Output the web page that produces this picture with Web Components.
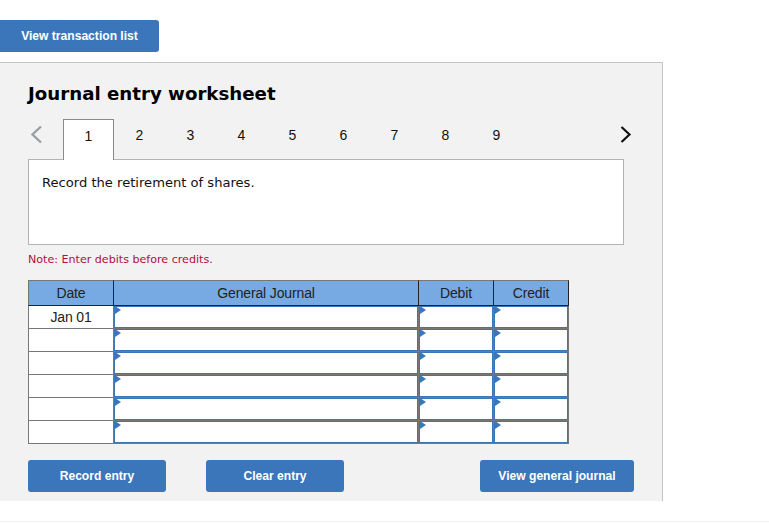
<!DOCTYPE html>
<html>
<head>
<meta charset="utf-8">
<style>
  html, body { margin: 0; padding: 0; background: #fff; }
  body { height: 523px; overflow: hidden; font-family: "Liberation Sans", Arial, sans-serif; }
</style>
</head>
<body>
<journal-page></journal-page>

<script>
class blueButton extends HTMLElement {
    constructor() {
        super();
        this.attachShadow({mode: 'open'});
        this.shadowRoot.innerHTML = `
        <style>
            :host{
                display: flex;
                align-items: center;
                justify-content: center;
                box-sizing: border-box;
                height: 32px;
                background: #3b76bb;
                border-radius: 3px;
                color: #fff;
                font: bold 12.1px "Liberation Sans", Arial, sans-serif;
                cursor: pointer;
            }
        </style>
        <slot></slot>`;
    }
}

class stepTabs extends HTMLElement {
    constructor() {
        super();
        this.attachShadow({mode: 'open'});
        let tabs = '';
        for (let i = 1; i <= 9; i++) {
            tabs += `<div class="tab ${i == 1 ? 'active' : ''}">${i}</div>`;
        }
        this.shadowRoot.innerHTML = `
        <style>
            :host{
                display: flex;
                height: 41px;
                position: relative;
                z-index: 1;
            }
            .arrow{
                width: 35px;
                height: 30px;
                flex: none;
            }
            .tab{
                flex: none;
                box-sizing: border-box;
                width: 51px;
                height: 30px;
                padding-top: 8px;
                text-align: center;
                font: 14px/16px "Liberation Sans", Arial, sans-serif;
                color: #111;
            }
            .tab.active{
                height: 41px;
                background: #fff;
                border: 1px solid #8a8a8a;
                border-bottom: 0;
            }
            .next{
                margin-left: 97px;
                width: 20px;
            }
        </style>
        <svg class="arrow" viewBox="0 0 35 30">
            <path d="M13 7.5 L4.5 15.5 L13 23.5" fill="none" stroke="#9aa0a6" stroke-width="2.4"/>
        </svg>
        ${tabs}
        <svg class="arrow next" viewBox="0 0 20 30">
            <path d="M2.5 8 L10.5 15.5 L2.5 23" fill="none" stroke="#111" stroke-width="2.2"/>
        </svg>`;
    }
}

class journalGrid extends HTMLElement {
    constructor() {
        super();
        this.attachShadow({mode: 'open'});
        const input = () => `<div class="cell"><div class="inp"><i></i></div></div>`;
        let rows = '';
        for (let i = 0; i < 6; i++) {
            rows += `<div class="date">${i == 0 ? 'Jan 01' : ''}</div>`
                  + input() + input() + input();
        }
        this.shadowRoot.innerHTML = `
        <style>
            :host{
                display: grid;
                grid-template-columns: 86px 305px 75px 75px;
                grid-template-rows: 26px repeat(6, 23px);
                width: 541px;
                height: 164px;
                font: 14px "Liberation Sans", Arial, sans-serif;
                letter-spacing: -0.14px;
                color: #222;
            }
            .head{
                box-sizing: border-box;
                background: #77aae3;
                border-top: 1px solid #777;
                border-right: 1px solid #222;
                border-bottom: 1px solid #222;
                display: flex;
                align-items: center;
                justify-content: center;
            }
            .head.first{ border-left: 1px solid #777; }
            .date{
                box-sizing: border-box;
                background: #fff;
                border-left: 1px solid #777;
                border-right: 1px solid #777;
                border-bottom: 1px solid #777;
                display: flex;
                align-items: center;
                justify-content: center;
            }
            .cell{
                box-sizing: border-box;
                display: flex;
                border-right: 1px solid #777;
                border-bottom: 1px solid #777;
            }
            .inp{
                flex: 1;
                position: relative;
                background: #fff;
                border: 1px solid #3b76bb;
            }
            .inp i{
                position: absolute;
                left: 0;
                top: -1px;
                width: 0;
                height: 0;
                border-left: 6px solid #3b76bb;
                border-top: 4px solid transparent;
                border-bottom: 4px solid transparent;
            }
        </style>
        <div class="head first">Date</div>
        <div class="head">General Journal</div>
        <div class="head">Debit</div>
        <div class="head">Credit</div>
        ${rows}`;
    }
}

class journalPanel extends HTMLElement {
    constructor() {
        super();
        this.attachShadow({mode: 'open'});
        this.shadowRoot.innerHTML = `
        <style>
            :host{
                display: block;
                box-sizing: border-box;
                width: 663px;
                height: 439px;
                background: #f2f2f2;
                border-top: 1px solid #c4c4c4;
                border-right: 1px solid #c4c4c4;
                padding: 0 28px;
            }
            h2{
                margin: 0;
                padding-top: 19px;
                height: 37px;
                font: bold 18.2px/24px "DejaVu Sans", Verdana, sans-serif;
                color: #000;
                white-space: nowrap;
            }
            step-tabs{ margin-bottom: -1px; }
            .box{
                box-sizing: border-box;
                width: 596px;
                height: 86px;
                background: #fff;
                border: 1px solid #b4b4b4;
                padding: 14px 13px;
                font: 13.1px/17px "DejaVu Sans", Verdana, sans-serif;
                color: #111;
            }
            .note{
                margin: 8px 0 13px;
                font: 11.1px/14px "DejaVu Sans", Verdana, sans-serif;
                color: #b0103c;
            }
            .actions{
                display: flex;
                margin-top: 16px;
                width: 606px;
            }
            .rec, .clr{ width: 138px; }
            .rec{ margin-right: 40px; }
            .gen{ width: 154px; margin-left: auto; }
        </style>
        <h2>Journal entry worksheet</h2>
        <step-tabs></step-tabs>
        <div class="box">Record the retirement of shares.</div>
        <div class="note">Note: Enter debits before credits.</div>
        <journal-grid></journal-grid>
        <div class="actions">
            <blue-button class="rec">Record entry</blue-button>
            <blue-button class="clr">Clear entry</blue-button>
            <blue-button class="gen">View general journal</blue-button>
        </div>`;
    }
}

class journalPage extends HTMLElement {
    constructor() {
        super();
        this.attachShadow({mode: 'open'});
        this.shadowRoot.innerHTML = `
        <style>
            :host{
                display: block;
                width: 769px;
                height: 523px;
                padding-top: 20px;
                box-sizing: border-box;
            }
            .top{
                width: 159px;
                margin-bottom: 10px;
                border-radius: 0 3px 3px 0;
            }
            .foot{
                margin-top: 20px;
                border-top: 1px solid #efefef;
            }
        </style>
        <blue-button class="top">View transaction list</blue-button>
        <journal-panel></journal-panel>
        <div class="foot"></div>`;
    }
}

window.customElements.define('blue-button', blueButton);
window.customElements.define('step-tabs', stepTabs);
window.customElements.define('journal-grid', journalGrid);
window.customElements.define('journal-panel', journalPanel);
window.customElements.define('journal-page', journalPage);
</script>
</body>
</html>
